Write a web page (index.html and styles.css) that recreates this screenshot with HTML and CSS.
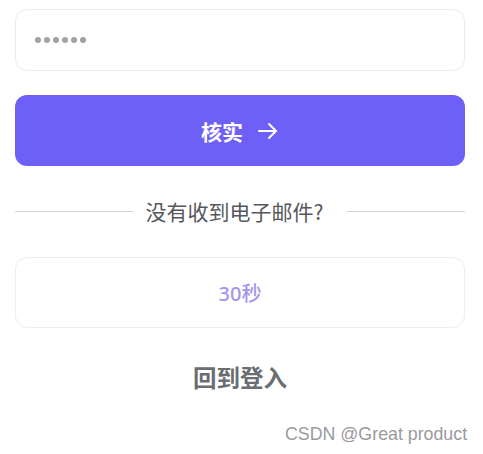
FILE: index.html
```html
<!DOCTYPE html>
<html lang="zh-CN">
<head>
<meta charset="utf-8">
<link rel="stylesheet" href="styles.css">
</head>
<body>
<main class="page">
  <div class="field">
    <span class="dot"></span><span class="dot"></span><span class="dot"></span><span class="dot"></span><span class="dot"></span><span class="dot"></span>
  </div>
  <button class="verify">
    <span class="verify-label">核实</span>
    <svg class="arrow" width="22" height="18" viewBox="0 0 22 18" fill="none" stroke="#fff" stroke-width="2" stroke-linecap="round" stroke-linejoin="round">
      <path d="M2 9H19"/>
      <path d="M12 2L19 9L12 16"/>
    </svg>
  </button>
  <div class="divider">
    <span class="line"></span>
    <span class="divider-text">没有收到电子邮件?</span>
    <span class="line"></span>
  </div>
  <div class="resend">30秒</div>
  <div class="back">回到登入</div>
</main>
<div class="watermark">CSDN @Great product</div>
</body>
</html>
```
FILE: styles.css
```css
html, body {
  margin: 0;
  padding: 0;
  background: #ffffff;
}
body {
  width: 483px;
  height: 454px;
  position: relative;
  overflow: hidden;
  font-family: "Noto Sans", "Noto Sans CJK SC", sans-serif;
}
.page {
  width: 450px;
  padding: 9px 0 0 15px;
  display: flex;
  flex-direction: column;
}
.field {
  box-sizing: border-box;
  height: 62px;
  border: 1px solid #ebebef;
  border-radius: 12px;
  display: flex;
  align-items: center;
  gap: 3.1px;
  padding-left: 19px;
}
.dot {
  width: 6px;
  height: 6px;
  border-radius: 50%;
  background: #a0a0a8;
}
.verify {
  margin-top: 24px;
  height: 71px;
  border: none;
  border-radius: 12px;
  background: #6e5ff6;
  display: flex;
  align-items: center;
  justify-content: center;
  gap: 14px;
  padding: 0;
  font-family: inherit;
}
.verify-label {
  color: #ffffff;
  font-size: 21px;
  font-weight: 700;
  font-family: "Noto Sans CJK SC", sans-serif;
}
.arrow {
  display: block;
}
.divider {
  margin-top: 32px;
  height: 26px;
  display: flex;
  align-items: center;
}
.line {
  flex: 1;
  height: 1px;
  background: #d4d4d8;
}
.divider-text {
  font-family: "Noto Sans CJK SC", sans-serif;
  font-size: 21px;
  color: #55575c;
  line-height: 26px;
  margin: 0 24px 0 13px;
}
.resend {
  margin-top: 33px;
  box-sizing: border-box;
  height: 71px;
  border: 1px solid #eeeef2;
  border-radius: 12px;
  display: flex;
  align-items: center;
  justify-content: center;
  color: #a295ec;
  font-size: 20px;
  font-weight: 500;
  font-family: "Noto Sans", "Noto Sans CJK SC", sans-serif;
}
.back {
  margin-top: 34px;
  text-align: center;
  font-family: "Noto Sans CJK SC", sans-serif;
  font-weight: 700;
  font-size: 23.5px;
  line-height: 30px;
  color: #6a6d72;
}
.watermark {
  position: absolute;
  left: 285px;
  top: 423px;
  font-family: "Liberation Sans", sans-serif;
  font-size: 17.8px;
  line-height: 22px;
  color: #9a9a9c;
  white-space: nowrap;
}
```
